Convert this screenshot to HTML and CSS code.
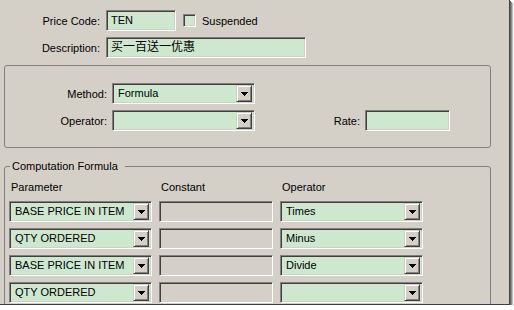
FILE: index.html
```html
<!DOCTYPE html>
<html>
<head>
<meta charset="utf-8">
<link rel="stylesheet" href="styles.css">
</head>
<body>
<div class="window">
  <div class="top">
    <div class="row">
      <span class="lbl lbl-top">Price Code:</span>
      <div class="field code">TEN</div>
      <span class="check"></span>
      <span class="check-label">Suspended</span>
    </div>
    <div class="row">
      <span class="lbl lbl-top">Description:</span>
      <div class="field desc">买一百送一优惠</div>
    </div>
  </div>

  <div class="group g1">
    <div class="row">
      <span class="lbl lbl-g1">Method:</span>
      <div class="select s-method"><span class="val">Formula</span><span class="btn"><svg width="7" height="4" viewBox="0 0 7 4"><path d="M0 0h7v1h-1v1h-1v1h-1v1h-1v-1h-1v-1h-1v-1h-1z" fill="#000"/></svg></span></div>
    </div>
    <div class="row">
      <span class="lbl lbl-g1">Operator:</span>
      <div class="select s-method"><span class="val"></span><span class="btn"><svg width="7" height="4" viewBox="0 0 7 4"><path d="M0 0h7v1h-1v1h-1v1h-1v1h-1v-1h-1v-1h-1v-1h-1z" fill="#000"/></svg></span></div>
      <span class="lbl lbl-rate">Rate:</span>
      <div class="field rate"></div>
    </div>
  </div>

  <fieldset class="g2">
    <legend>Computation Formula</legend>
    <div class="grid">
      <span class="hdr">Parameter</span>
      <span class="hdr">Constant</span>
      <span class="hdr">Operator</span>

      <div class="select"><span class="val">BASE PRICE IN ITEM</span><span class="btn"><svg width="7" height="4" viewBox="0 0 7 4"><path d="M0 0h7v1h-1v1h-1v1h-1v1h-1v-1h-1v-1h-1v-1h-1z" fill="#000"/></svg></span></div>
      <div class="field off"></div>
      <div class="select"><span class="val">Times</span><span class="btn"><svg width="7" height="4" viewBox="0 0 7 4"><path d="M0 0h7v1h-1v1h-1v1h-1v1h-1v-1h-1v-1h-1v-1h-1z" fill="#000"/></svg></span></div>

      <div class="select"><span class="val">QTY ORDERED</span><span class="btn"><svg width="7" height="4" viewBox="0 0 7 4"><path d="M0 0h7v1h-1v1h-1v1h-1v1h-1v-1h-1v-1h-1v-1h-1z" fill="#000"/></svg></span></div>
      <div class="field off"></div>
      <div class="select"><span class="val">Minus</span><span class="btn"><svg width="7" height="4" viewBox="0 0 7 4"><path d="M0 0h7v1h-1v1h-1v1h-1v1h-1v-1h-1v-1h-1v-1h-1z" fill="#000"/></svg></span></div>

      <div class="select"><span class="val">BASE PRICE IN ITEM</span><span class="btn"><svg width="7" height="4" viewBox="0 0 7 4"><path d="M0 0h7v1h-1v1h-1v1h-1v1h-1v-1h-1v-1h-1v-1h-1z" fill="#000"/></svg></span></div>
      <div class="field off"></div>
      <div class="select"><span class="val">Divide</span><span class="btn"><svg width="7" height="4" viewBox="0 0 7 4"><path d="M0 0h7v1h-1v1h-1v1h-1v1h-1v-1h-1v-1h-1v-1h-1z" fill="#000"/></svg></span></div>

      <div class="select"><span class="val">QTY ORDERED</span><span class="btn"><svg width="7" height="4" viewBox="0 0 7 4"><path d="M0 0h7v1h-1v1h-1v1h-1v1h-1v-1h-1v-1h-1v-1h-1z" fill="#000"/></svg></span></div>
      <div class="field off"></div>
      <div class="select"><span class="val"></span><span class="btn"><svg width="7" height="4" viewBox="0 0 7 4"><path d="M0 0h7v1h-1v1h-1v1h-1v1h-1v-1h-1v-1h-1v-1h-1z" fill="#000"/></svg></span></div>
    </div>
  </fieldset>
</div>
</body>
</html>
```

FILE: styles.css
```css
html, body {
  margin: 0;
  background: #ffffff;
}
body {
  font: 11px "Liberation Sans", Arial, "Noto Sans CJK SC", sans-serif;
  color: #000;
}
.window {
  width: 509px;
  height: 304px;
  background: #d4d0c8;
  border-right: 1px solid #404040;
  border-bottom: 1px solid #404040;
  box-shadow: 1px 1px 0 #6a6a6a, 2px 2px 0 #8c8c8c, 3px 3px 1px rgba(0,0,0,0.25);
  overflow: hidden;
}
.top {
  display: flex;
  flex-direction: column;
  gap: 6px;
  padding-top: 10px;
}
.row {
  display: flex;
  align-items: center;
}
.lbl {
  text-align: right;
  flex: none;
}
.lbl-top {
  width: 100px;
  margin-right: 6px;
}
.field, .select, .check {
  box-sizing: border-box;
  border: 1px solid;
  border-color: #808080 #ffffff #ffffff #808080;
  box-shadow: inset 1px 1px #404040, inset -1px -1px #d4d0c8;
  background: #cde8cf;
}
.field {
  height: 21px;
  line-height: 19px;
  padding-left: 4px;
  white-space: nowrap;
}
.code { width: 70px; }
.desc {
  width: 200px;
  font-size: 12px;
  font-family: "Liberation Sans", "Noto Sans CJK SC", sans-serif;
}
.check {
  width: 13px;
  height: 13px;
  margin-left: 7px;
}
.check-label {
  margin-left: 6px;
}
.group {
  box-sizing: border-box;
  margin-left: 4px;
  width: 487px;
  border: 1px solid #808080;
  border-radius: 3px;
}
.g1 {
  margin-top: 7px;
  height: 83px;
  padding-top: 17px;
  display: flex;
  flex-direction: column;
  gap: 6px;
}
.lbl-g1 {
  width: 102px;
  margin-right: 5px;
}
.select {
  display: flex;
  align-items: center;
  height: 21px;
  padding: 2px;
  white-space: nowrap;
}
.s-method { width: 143px; }
.select .val {
  flex: 1;
  padding-left: 3px;
  line-height: 17px;
  overflow: hidden;
}
.select .btn {
  flex: none;
  width: 16px;
  height: 17px;
  box-sizing: border-box;
  background: #d4d0c8;
  border: 1px solid;
  border-color: #d4d0c8 #404040 #404040 #d4d0c8;
  box-shadow: inset 1px 1px #ffffff, inset -1px -1px #808080;
  display: flex;
  align-items: center;
  justify-content: center;
}
.select .btn svg {
  display: block;
  shape-rendering: crispEdges;
}
.lbl-rate {
  width: 105px;
  margin-right: 5px;
}
.rate {
  width: 85px;
}
.g2 {
  margin: 12px 0 0 4px;
  padding: 0 0 0 4px;
  width: 487px;
  box-sizing: border-box;
  height: 160px;
  border: 1px solid #808080;
  border-radius: 3px;
}
.g2 legend {
  margin-left: 1px;
  padding: 0 7px 0 2px;
  line-height: 13px;
}
.grid {
  display: grid;
  grid-template-columns: 143px 114px 143px;
  column-gap: 7px;
  row-gap: 6px;
  padding-top: 8px;
}
.hdr {
  line-height: 13px;
  padding-left: 2px;
  margin-bottom: 1px;
}
.field.off {
  background: #d4d0c8;
}
```
